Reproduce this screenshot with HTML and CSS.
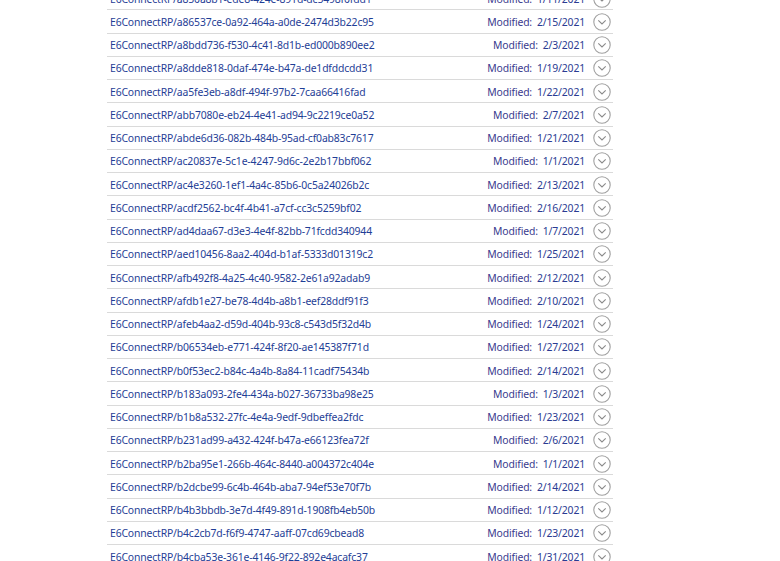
FILE: index.html
```html
<!DOCTYPE html>
<html>
<head>
    <meta charset="UTF-8">
    <title>E6ConnectRP</title>
    <link rel="stylesheet" href="styles.css">
</head>
<body>
    <div class="container">
        <div id="fileList"></div>
    </div>

    <script>
        const files = [
            ['E6ConnectRP/a850a8b1-ede8-424e-891d-dc5498f0fdd1', '1/11/2021'],
            ['E6ConnectRP/a86537ce-0a92-464a-a0de-2474d3b22c95', '2/15/2021'],
            ['E6ConnectRP/a8bdd736-f530-4c41-8d1b-ed000b890ee2', '2/3/2021'],
            ['E6ConnectRP/a8dde818-0daf-474e-b47a-de1dfddcdd31', '1/19/2021'],
            ['E6ConnectRP/aa5fe3eb-a8df-494f-97b2-7caa66416fad', '1/22/2021'],
            ['E6ConnectRP/abb7080e-eb24-4e41-ad94-9c2219ce0a52', '2/7/2021'],
            ['E6ConnectRP/abde6d36-082b-484b-95ad-cf0ab83c7617', '1/21/2021'],
            ['E6ConnectRP/ac20837e-5c1e-4247-9d6c-2e2b17bbf062', '1/1/2021'],
            ['E6ConnectRP/ac4e3260-1ef1-4a4c-85b6-0c5a24026b2c', '2/13/2021'],
            ['E6ConnectRP/acdf2562-bc4f-4b41-a7cf-cc3c5259bf02', '2/16/2021'],
            ['E6ConnectRP/ad4daa67-d3e3-4e4f-82bb-71fcdd340944', '1/7/2021'],
            ['E6ConnectRP/aed10456-8aa2-404d-b1af-5333d01319c2', '1/25/2021'],
            ['E6ConnectRP/afb492f8-4a25-4c40-9582-2e61a92adab9', '2/12/2021'],
            ['E6ConnectRP/afdb1e27-be78-4d4b-a8b1-eef28ddf91f3', '2/10/2021'],
            ['E6ConnectRP/afeb4aa2-d59d-404b-93c8-c543d5f32d4b', '1/24/2021'],
            ['E6ConnectRP/b06534eb-e771-424f-8f20-ae145387f71d', '1/27/2021'],
            ['E6ConnectRP/b0f53ec2-b84c-4a4b-8a84-11cadf75434b', '2/14/2021'],
            ['E6ConnectRP/b183a093-2fe4-434a-b027-36733ba98e25', '1/3/2021'],
            ['E6ConnectRP/b1b8a532-27fc-4e4a-9edf-9dbeffea2fdc', '1/23/2021'],
            ['E6ConnectRP/b231ad99-a432-424f-b47a-e66123fea72f', '2/6/2021'],
            ['E6ConnectRP/b2ba95e1-266b-464c-8440-a004372c404e', '1/1/2021'],
            ['E6ConnectRP/b2dcbe99-6c4b-464b-aba7-94ef53e70f7b', '2/14/2021'],
            ['E6ConnectRP/b4b3bbdb-3e7d-4f49-891d-1908fb4eb50b', '1/12/2021'],
            ['E6ConnectRP/b4c2cb7d-f6f9-4747-aaff-07cd69cbead8', '1/23/2021'],
            ['E6ConnectRP/b4cba53e-361e-4146-9f22-892e4acafc37', '1/31/2021']
        ];

        const chevron = `
            <svg class="expand" width="18" height="18" viewBox="0 0 18 18">
                <circle cx="9" cy="9" r="8.2" fill="none" stroke="#a0a0a0" stroke-width="1.1"/>
                <path d="M5.3 7.4 L9 11 L12.7 7.4" fill="none" stroke="#8a8a8a" stroke-width="1.1"/>
            </svg>`;

        document.getElementById('fileList').innerHTML = files.map(([name, date]) => `
            <div class="file-item">
                <div class="file-name">${name}</div>
                <div class="file-date">Modified:<span class="date">${date}</span></div>
                ${chevron}
            </div>
        `).join('');
    </script>
</body>
</html>
```

FILE: styles.css
```css
* {
    margin: 0;
    padding: 0;
    box-sizing: border-box;
}

body {
    font-family: "Noto Sans", "Open Sans", sans-serif;
    background-color: #ffffff;
    color: #333;
    overflow: hidden;
}

.container {
    width: 506px;
    margin-left: 107px;
    margin-top: -13px;
}

.file-item {
    display: flex;
    align-items: center;
    height: 23.26px;
    border-bottom: 1px solid #dadada;
    font-size: 10.4px;
    letter-spacing: -0.15px;
    padding: 1px 2px 0 3px;
}

.file-name {
    flex: 1;
    color: #1f3e96;
    white-space: nowrap;
}

.file-date {
    color: #3a3a8e;
    white-space: nowrap;
    margin-right: 8px;
}

.date {
    margin-left: 5px;
    color: #2a3b92;
}

.expand {
    flex-shrink: 0;
}
```
